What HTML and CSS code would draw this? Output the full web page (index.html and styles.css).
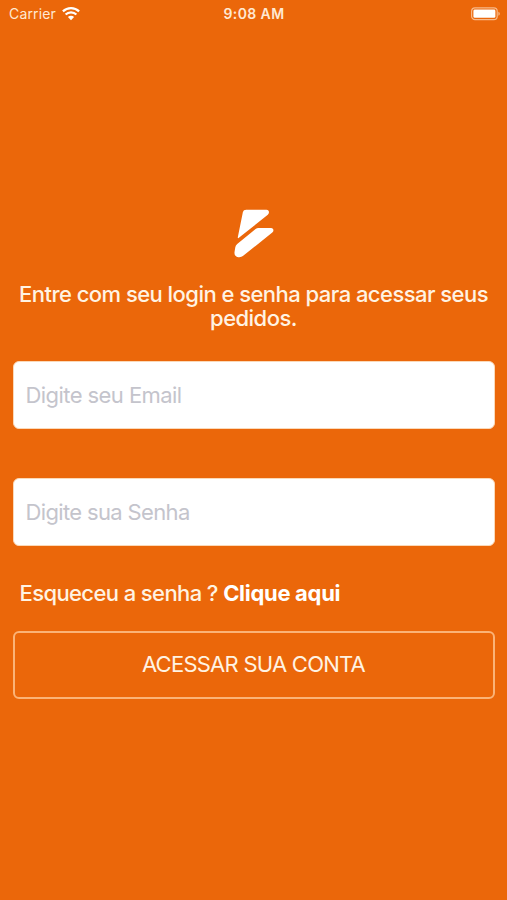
FILE: index.html
```html
<!DOCTYPE html>
<html lang="pt-BR">
<head>
  <meta charset="UTF-8" />
  <meta name="viewport" content="width=device-width, initial-scale=1.0"/>
  <title>Login</title>
  <link rel="stylesheet" href="styles.css">
</head>
<body>

  <header class="status-bar">
    <div class="carrier">
      <span>Carrier</span>
      <svg class="wifi" viewBox="0 0 18 14" width="18" height="14">
        <path d="M0.9 4.4a11.6 11.6 0 0 1 16.2 0" />
        <path d="M3.6 7.6a7.6 7.6 0 0 1 10.8 0" />
        <path class="dot" d="M5.9 10a4.4 4.4 0 0 1 6.2 0L9 13.2z" />
      </svg>
    </div>
    <div class="time">9:08 AM</div>
    <div class="battery">
      <svg viewBox="0 0 31 14" width="31" height="14">
        <rect class="shell" x="1.6" y="0.8" width="25.6" height="11.8" rx="3.4" />
        <rect class="charge" x="3.4" y="2.6" width="22" height="8.2" rx="1.4" />
        <path class="tip" d="M28.4 4.7v4c1.9-.6 1.9-3.4 0-4z" />
      </svg>
    </div>
  </header>

  <main class="login">
    <svg class="logo" viewBox="0 0 40 49" width="40" height="49">
      <path d="M12.2 0.8H32.5C35.2 0.8 35.8 4 33.8 5.7L5.2 28.6Q3.4 30 3.9 27.8L8.9 3.1Q9.4 0.8 12.2 0.8z" />
      <path d="M24.4 18.9H37C39.6 18.9 40.3 22 38.3 23.6L9.5 46.6C7.4 48.2 5.6 48.6 3.4 48C0.9 47.3 0.1 45 0.6 42.6L1.3 38.2Q1.6 36.3 3.2 35L21.6 20Q22.9 18.9 24.4 18.9z" />
    </svg>

    <p class="intro">Entre com seu login e senha para acessar seus pedidos.</p>

    <form class="form">
      <input class="campo" type="email" placeholder="Digite seu Email" />
      <input class="campo senha" type="password" placeholder="Digite sua Senha" />
      <p class="esqueceu">Esqueceu a senha ? <a href="#">Clique aqui</a></p>
      <button class="btn" type="button">ACESSAR SUA CONTA</button>
    </form>
  </main>

</body>
</html>
```

FILE: styles.css
```css
* {
  box-sizing: border-box;
}
body {
  margin: 0;
  min-height: 100vh;
  background: #eb670a;
  color: #fff3e3;
  font-family: Inter, "Liberation Sans", sans-serif;
}
.status-bar {
  display: grid;
  grid-template-columns: 1fr auto 1fr;
  align-items: center;
  height: 27px;
  padding: 0 6px 0 9px;
  font-size: 14px;
  color: #ffe9d2;
}
.carrier {
  display: flex;
  align-items: center;
  gap: 6px;
  letter-spacing: 0.15px;
}
.wifi {
  fill: none;
  stroke: #fff;
  stroke-width: 2.2;
}
.wifi .dot {
  fill: #fff;
  stroke: none;
}
.time {
  margin-left: -2px;
  font-weight: 600;
  letter-spacing: 0.4px;
}
.battery {
  display: flex;
  justify-content: flex-end;
}
.shell {
  fill: none;
  stroke: #f7b98a;
  stroke-width: 1.2;
}
.charge {
  fill: #fff;
}
.tip {
  fill: #f7b98a;
}
.login {
  display: flex;
  flex-direction: column;
  align-items: center;
  padding: 182px 12.5px 0;
}
.logo {
  fill: #fff;
}
.intro {
  margin: 24px 0 30px;
  font-size: 22px;
  font-weight: 450;
  line-height: 24.3px;
  letter-spacing: -0.54px;
  text-align: center;
}
.form {
  width: 100%;
}
.campo {
  display: block;
  width: 100%;
  height: 68px;
  margin-bottom: 49px;
  padding: 1px 12px 0;
  border: 1px solid #fbd9b8;
  border-radius: 6px;
  background: #fff;
  font-family: inherit;
  font-size: 22px;
  letter-spacing: -0.57px;
}
.campo.senha {
  padding-top: 0;
  letter-spacing: -0.65px;
}
.campo::placeholder {
  color: #c4c4cc;
  opacity: 1;
}
.esqueceu {
  margin: -14px 0 25px;
  padding-left: 7px;
  font-size: 22px;
  font-weight: 450;
  line-height: 25px;
  letter-spacing: -0.6px;
}
.esqueceu a {
  color: #fff;
  font-weight: 700;
  letter-spacing: -0.3px;
  text-decoration: none;
}
.btn {
  display: block;
  width: 100%;
  height: 68px;
  padding: 0 0 2px;
  border: 2px solid #fbb377;
  border-radius: 6px;
  background: transparent;
  color: #fff3e3;
  font-family: inherit;
  font-size: 22px;
  letter-spacing: -0.75px;
}
```
